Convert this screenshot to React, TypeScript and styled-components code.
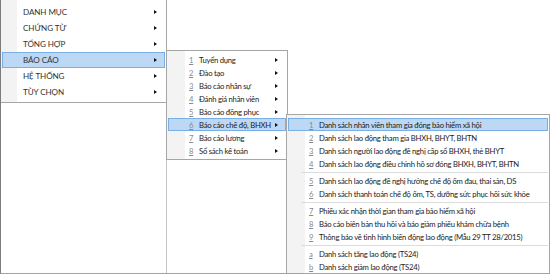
import React from "react";
import styled, { createGlobalStyle } from "styled-components";

const GlobalStyle = createGlobalStyle`
  html, body { margin: 0; padding: 0; background: #ffffff; }
  body { font-family: "Lato", "Open Sans", sans-serif; }
`;

const Frame = styled.div`
  position: relative;
  width: 550px;
  height: 274px;
  box-sizing: border-box;
  background: #ffffff;
  border-left: 1px solid #7c7c7c;
  border-bottom: 1px solid #a4a4a4;
  display: flex;
  overflow: hidden;
`;

const Pane = styled.div`
  width: 165px;
  flex: none;
  border-right: 1px solid #c4c4c4;
`;

const Menu = styled.div<{ $left: number; $top: number; $width: number; $pad: number; $gutter: number }>`
  position: absolute;
  left: ${(p) => p.$left}px;
  top: ${(p) => p.$top}px;
  width: ${(p) => p.$width}px;
  box-sizing: border-box;
  padding: ${(p) => p.$pad}px 1px 2px 1px;
  border: 1px solid #a6a6a6;
  background: linear-gradient(
    to right,
    #f3f3f3 0,
    #f3f3f3 ${(p) => p.$gutter}px,
    #ffffff ${(p) => p.$gutter}px
  );
  display: flex;
  flex-direction: column;
`;

const MainMenu = styled(Menu)`
  border-left: none;
  border-top: none;
`;

const Row = styled.div<{ $h: number; $active?: boolean; $indent: number; $right: number }>`
  height: ${(p) => p.$h}px;
  box-sizing: border-box;
  display: flex;
  align-items: center;
  padding-left: ${(p) => p.$indent}px;
  padding-right: ${(p) => p.$right}px;
  border: 1px solid ${(p) => (p.$active ? "#7aafe6" : "transparent")};
  background: ${(p) => (p.$active ? "#bcd8f5" : "transparent")};
  color: #1b1b1b;
  font-size: 7.7px;
  letter-spacing: -0.25px;
  white-space: nowrap;
`;

const MainLabel = styled.span`
  flex: 1;
  text-transform: uppercase;
  color: #333333;
  font-size: 8.1px;
  letter-spacing: -0.1px;
`;

const Key = styled.span`
  width: 10px;
  flex: none;
  color: #8a8a8a;
  text-decoration: underline;
`;

const Label = styled.span`
  flex: 1;
`;

const Arrow = styled.span`
  width: 0;
  height: 0;
  flex: none;
  border-top: 2.5px solid transparent;
  border-bottom: 2.5px solid transparent;
  border-left: 3px solid #111111;
`;

const Separator = styled.div`
  height: 4px;
  display: flex;
  align-items: center;
  padding-left: 13px;
  &::after {
    content: "";
    flex: 1;
    height: 1px;
    background: #dcdcdc;
  }
`;

const mainItems = ["Danh mục", "Chứng từ", "Tổng hợp", "Báo cáo", "Hệ thống", "Tùy chọn"];

const subItems = [
  ["1", "Tuyển dụng"],
  ["2", "Đào tạo"],
  ["3", "Báo cáo nhân sự"],
  ["4", "Đánh giá nhân viên"],
  ["5", "Báo cáo đồng phục"],
  ["6", "Báo cáo chế độ, BHXH"],
  ["7", "Báo cáo lương"],
  ["8", "Sổ sách kế toán"],
];

type Entry = [string, string] | "sep";

const reportItems: Entry[] = [
  ["1", "Danh sách nhân viên tham gia đóng bảo hiểm xã hội"],
  ["2", "Danh sách lao động tham gia BHXH, BHYT, BHTN"],
  ["3", "Danh sách người lao động đề nghị cấp sổ BHXH, thẻ BHYT"],
  ["4", "Danh sách lao động điều chỉnh hồ sơ đóng BHXH, BHYT, BHTN"],
  "sep",
  ["5", "Danh sách lao động đề nghị hưởng chế độ ốm đau, thai sản, DS"],
  ["6", "Danh sách thanh toán chế độ ốm, TS, dưỡng sức phục hồi sức khỏe"],
  "sep",
  ["7", "Phiếu xác nhận thời gian tham gia bảo hiểm xã hội"],
  ["8", "Báo cáo biên bản thu hồi và báo giảm phiếu khám chữa bệnh"],
  ["9", "Thông báo về tình hình biến động lao động (Mẫu 29 TT 28/2015)"],
  "sep",
  ["a", "Danh sách tăng lao động (TS24)"],
  ["b", "Danh sách giảm lao động (TS24)"],
];

export default function App() {
  return (
    <>
      <GlobalStyle />
      <Frame>
        <Pane />
        <MainMenu $left={0} $top={0} $width={166} $pad={4} $gutter={16}>
          {mainItems.map((t, i) => (
            <Row key={t} $h={16} $indent={20} $right={7} $active={i === 3}>
              <MainLabel>{t}</MainLabel>
              <Arrow />
            </Row>
          ))}
        </MainMenu>
        <Menu $left={165} $top={50} $width={122} $pad={2} $gutter={18}>
          {subItems.map(([k, t]) => (
            <Row key={k} $h={13} $indent={20} $right={7} $active={k === "6"}>
              <Key>{k}</Key>
              <Label>{t}</Label>
              <Arrow />
            </Row>
          ))}
        </Menu>
        <Menu $left={285} $top={114} $width={264} $pad={3} $gutter={18}>
          {reportItems.map((e, i) =>
            e === "sep" ? (
              <Separator key={"s" + i} />
            ) : (
              <Row key={e[0]} $h={13} $indent={20} $right={6} $active={e[0] === "1"}>
                <Key>{e[0]}</Key>
                <Label>{e[1]}</Label>
              </Row>
            )
          )}
        </Menu>
      </Frame>
    </>
  );
}
